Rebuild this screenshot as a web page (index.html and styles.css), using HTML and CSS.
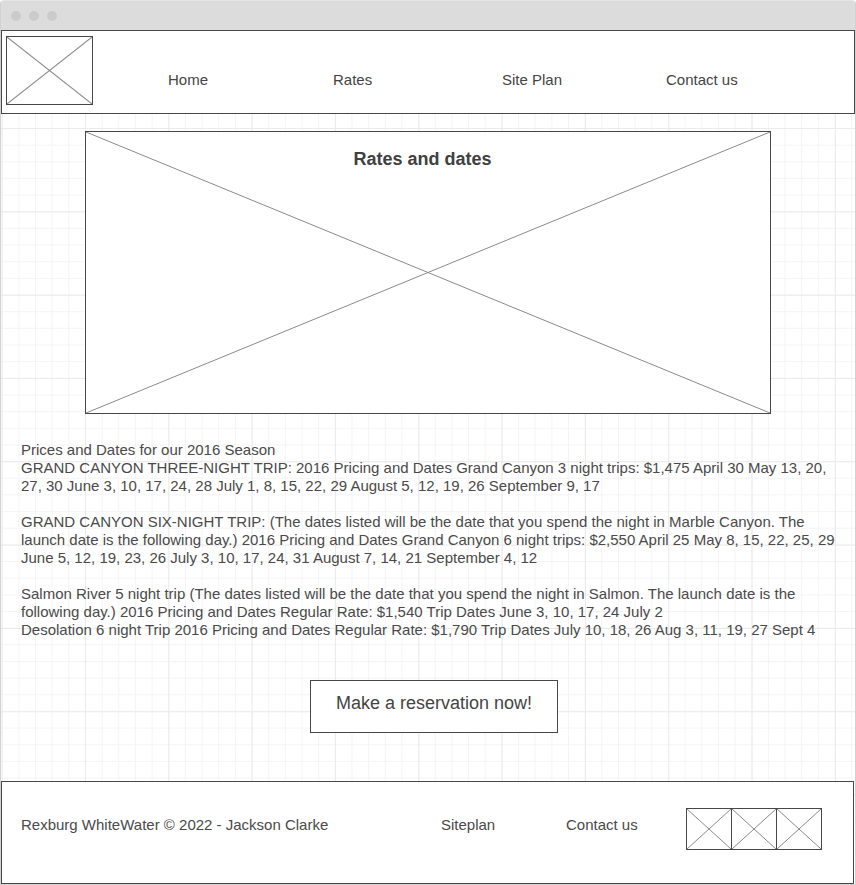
FILE: index.html
```html
<!DOCTYPE html>
<html lang="en">
<head>
<meta charset="utf-8">
<title>Rates and dates</title>
<link rel="stylesheet" href="styles.css">
</head>
<body>
<div class="window">
  <div class="titlebar">
    <span class="dot"></span><span class="dot"></span><span class="dot"></span>
  </div>
  <div class="page">
    <header class="header">
      <div class="ph logo">
        <svg class="x" viewBox="0 0 100 100" preserveAspectRatio="none"><line x1="0" y1="0" x2="100" y2="100"/><line x1="100" y1="0" x2="0" y2="100"/></svg>
      </div>
      <nav class="nav">
        <a>Home</a>
        <a>Rates</a>
        <a>Site Plan</a>
        <a>Contact us</a>
      </nav>
    </header>

    <main class="main">
      <div class="ph hero">
        <svg class="x" viewBox="0 0 100 100" preserveAspectRatio="none"><line x1="0" y1="0" x2="100" y2="100"/><line x1="100" y1="0" x2="0" y2="100"/></svg>
        <h1 class="hero-title">Rates and dates</h1>
      </div>

      <div class="content">
        <p>Prices and Dates for our 2016 Season<br>GRAND CANYON THREE-NIGHT TRIP: 2016 Pricing and Dates Grand Canyon 3 night trips: $1,475 April 30 May 13, 20, 27, 30 June 3, 10, 17, 24, 28 July 1, 8, 15, 22, 29 August 5, 12, 19, 26 September 9, 17</p>
        <p>GRAND CANYON SIX-NIGHT TRIP: (The dates listed will be the date that you spend the night in Marble Canyon. The launch date is the following day.) 2016 Pricing and Dates Grand Canyon 6 night trips: $2,550 April 25 May 8, 15, 22, 25, 29 June 5, 12, 19, 23, 26 July 3, 10, 17, 24, 31 August 7, 14, 21 September 4, 12</p>
        <p>Salmon River 5 night trip (The dates listed will be the date that you spend the night in Salmon. The launch date is the following day.) 2016 Pricing and Dates Regular Rate: $1,540 Trip Dates June 3, 10, 17, 24 July 2<br>Desolation 6 night Trip 2016 Pricing and Dates Regular Rate: $1,790 Trip Dates July 10, 18, 26 Aug 3, 11, 19, 27 Sept 4</p>
      </div>

      <div class="cta-row">
        <a class="cta">Make a reservation now!</a>
      </div>
    </main>

    <footer class="footer">
      <span class="copy">Rexburg WhiteWater © 2022 - Jackson Clarke</span>
      <a class="flink">Siteplan</a>
      <a class="flink">Contact us</a>
      <div class="icons">
        <div class="ph icon"><svg class="x" viewBox="0 0 100 100" preserveAspectRatio="none"><line x1="0" y1="0" x2="100" y2="100"/><line x1="100" y1="0" x2="0" y2="100"/></svg></div>
        <div class="ph icon"><svg class="x" viewBox="0 0 100 100" preserveAspectRatio="none"><line x1="0" y1="0" x2="100" y2="100"/><line x1="100" y1="0" x2="0" y2="100"/></svg></div>
        <div class="ph icon"><svg class="x" viewBox="0 0 100 100" preserveAspectRatio="none"><line x1="0" y1="0" x2="100" y2="100"/><line x1="100" y1="0" x2="0" y2="100"/></svg></div>
      </div>
    </footer>
  </div>
</div>
</body>
</html>
```

FILE: styles.css
```css
* { box-sizing: border-box; }

html, body {
  margin: 0;
  padding: 0;
  background: #ffffff;
}

body {
  font-family: "Liberation Sans", Arial, sans-serif;
  color: #4a4a4a;
  font-size: 15px;
  line-height: 18px;
}

.window {
  width: 856px;
  height: 885px;
  border: 1px solid #d2d2d2;
  border-top-color: #e6e6e6;
  border-radius: 4px 4px 0 0;
  display: flex;
  flex-direction: column;
  overflow: hidden;
}

.titlebar {
  height: 29px;
  flex: none;
  background: #dcdcdc;
  display: flex;
  align-items: center;
  gap: 8px;
  padding-left: 10px;
}

.dot {
  width: 10px;
  height: 10px;
  border-radius: 50%;
  background: #cbcbcb;
}

.page {
  flex: 1;
  display: flex;
  flex-direction: column;
  background-color: #ffffff;
  background-image:
    linear-gradient(to right, #ebebeb 1px, transparent 1px),
    linear-gradient(to bottom, #ebebeb 1px, transparent 1px),
    linear-gradient(to right, #f4f4f4 1px, transparent 1px),
    linear-gradient(to bottom, #f4f4f4 1px, transparent 1px);
  background-size: 83.333px 83.333px, 83.333px 83.333px, 16.667px 16.667px, 16.667px 16.667px;
  background-position: 0.7px 14.7px, 0.7px 14.7px, 0.7px 14.7px, 0.7px 14.7px;
}

/* placeholders */
.ph {
  position: relative;
  background: #ffffff;
  border: 1px solid #474747;
}

.x {
  position: absolute;
  inset: 0;
  width: 100%;
  height: 100%;
  display: block;
}

.x line {
  stroke: #8a8a8a;
  stroke-width: 1;
  vector-effect: non-scaling-stroke;
}

/* header */
.header {
  height: 84px;
  flex: none;
  background: #ffffff;
  border: 1px solid #474747;
  display: flex;
  align-items: flex-start;
  padding: 5px 0 0 4px;
}

.logo {
  width: 87px;
  height: 69px;
  flex: none;
}

.nav {
  display: grid;
  grid-template-columns: 165px 169px 164px auto;
  margin-left: 75px;
  margin-top: 35px;
}

.nav a {
  color: #444444;
  font-size: 15px;
  line-height: 18px;
}

/* main */
.main {
  flex: 1;
  display: flex;
  flex-direction: column;
}

.hero {
  width: 686px;
  height: 283px;
  margin: 17px 0 0 84px;
}

.hero-title {
  position: relative;
  margin: 16px 11px 0 0;
  text-align: center;
  font-size: 18px;
  line-height: 22px;
  font-weight: bold;
  color: #404040;
}

.content {
  width: 816px;
  margin: 27px 0 0 20px;
}

.content p {
  margin: 0 0 18px 0;
  font-size: 15px;
  line-height: 18px;
}

.content p:last-child {
  margin-bottom: 0;
}

.cta-row {
  display: flex;
  margin-top: 41px;
  padding-left: 309px;
}

.cta {
  width: 248px;
  height: 53px;
  border: 1px solid #474747;
  background: #ffffff;
  display: flex;
  align-items: center;
  justify-content: center;
  padding-bottom: 7px;
  font-size: 18px;
  color: #444444;
}

/* footer */
.footer {
  height: 103px;
  width: 853px;
  flex: none;
  background: #ffffff;
  border: 1px solid #474747;
  display: grid;
  grid-template-columns: 420px 125px 120px auto;
  align-items: start;
  padding: 0 0 0 19px;
}

.copy, .flink {
  margin-top: 34px;
  font-size: 15px;
  line-height: 18px;
  color: #4a4a4a;
}

.icons {
  display: flex;
  margin-top: 26px;
}

.icon {
  width: 46px;
  height: 42px;
}

.icon + .icon {
  margin-left: -1px;
}
```
